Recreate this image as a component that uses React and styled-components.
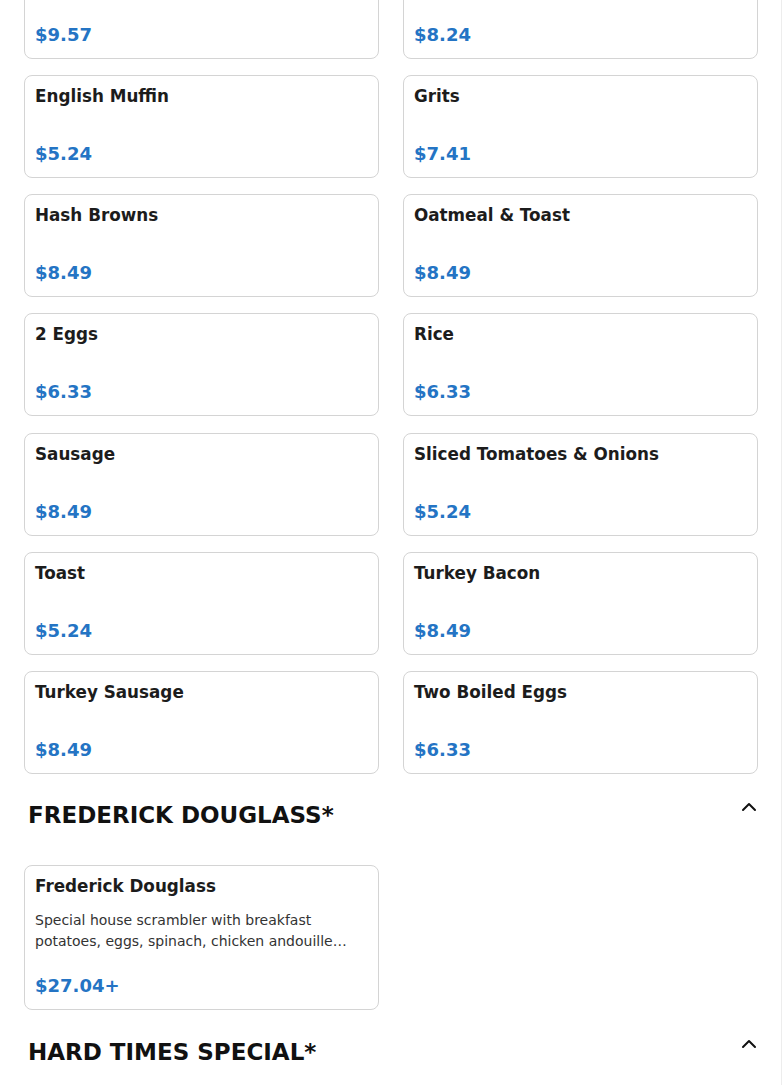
import React from "react";
import styled, { createGlobalStyle } from "styled-components";

const GlobalStyle = createGlobalStyle`
  html, body {
    margin: 0;
    padding: 0;
    background: #ffffff;
  }
  body {
    font-family: "DejaVu Sans", "Liberation Sans", sans-serif;
    color: #1a1a1a;
  }
  * { box-sizing: border-box; }
`;

const Page = styled.div`
  width: 782px;
  border-right: 1px solid #ededed;
  padding: 0 23px 40px 24px;
  overflow: hidden;
`;

const Scrolled = styled.div`
  margin-top: -44px;
`;

const Section = styled.section`
  display: flex;
  flex-direction: column;
  & + & {
    margin-top: 22.4px;
  }
`;

const SectionHeader = styled.div`
  display: flex;
  justify-content: space-between;
  align-items: flex-start;
  padding: 0 0 0 4px;
  margin-right: -3px;
  margin-bottom: 36px;
`;

const SectionTitle = styled.h2`
  margin: 5px 0 0;
  font-size: 23px;
  line-height: 28px;
  font-weight: 700;
  color: #111;
`;

const Toggle = styled.button`
  border: 0;
  background: transparent;
  padding: 0;
  margin-top: -1px;
  width: 24px;
  height: 24px;
  display: flex;
  align-items: center;
  justify-content: center;
  color: #111;
  cursor: pointer;
`;

const Grid = styled.div`
  display: grid;
  grid-template-columns: 1fr 1fr;
  column-gap: 24px;
  row-gap: 16.17px;
`;

const Card = styled.div`
  display: flex;
  flex-direction: column;
  min-height: 103px;
  padding: 10px 10px 13px;
  border: 1px solid #d4d4d4;
  border-radius: 8px;
  background: #fff;
`;

const ItemName = styled.div`
  font-size: 16.8px;
  font-weight: 700;
  color: #1c1c1c;
`;

const ItemDesc = styled.div`
  margin-top: 14px;
  font-size: 14px;
  line-height: 21px;
  color: #333;
  display: -webkit-box;
  -webkit-line-clamp: 2;
  -webkit-box-orient: vertical;
  overflow: hidden;
`;

const Price = styled.div`
  margin-top: auto;
  padding-top: ${(p) => (p.$hasDesc ? "23px" : "0")};
  font-size: 18px;
  font-weight: 700;
  color: #2474c4;
`;

const ChevronUp = () => (
  <svg
    width="24"
    height="24"
    viewBox="0 0 24 24"
    fill="none"
    stroke="currentColor"
    strokeWidth="2"
    strokeLinecap="round"
    strokeLinejoin="round"
  >
    <path d="m18 15-6-6-6 6" />
  </svg>
);

const sides = [
  { name: "Bacon", price: "$9.57" },
  { name: "Chicken Sausage", price: "$8.24" },
  { name: "English Muffin", price: "$5.24" },
  { name: "Grits", price: "$7.41" },
  { name: "Hash Browns", price: "$8.49" },
  { name: "Oatmeal & Toast", price: "$8.49" },
  { name: "2 Eggs", price: "$6.33" },
  { name: "Rice", price: "$6.33" },
  { name: "Sausage", price: "$8.49" },
  { name: "Sliced Tomatoes & Onions", price: "$5.24" },
  { name: "Toast", price: "$5.24" },
  { name: "Turkey Bacon", price: "$8.49" },
  { name: "Turkey Sausage", price: "$8.49" },
  { name: "Two Boiled Eggs", price: "$6.33" },
];

const douglass = [
  {
    name: "Frederick Douglass",
    desc: "Special house scrambler with breakfast potatoes, eggs, spinach, chicken andouille sausage, onions, bell peppers and cheese.",
    price: "$27.04+",
  },
];

const MenuCard = ({ item }) => (
  <Card>
    <ItemName>{item.name}</ItemName>
    {item.desc && <ItemDesc>{item.desc}</ItemDesc>}
    <Price $hasDesc={!!item.desc}>{item.price}</Price>
  </Card>
);

const MenuSection = ({ title, items }) => (
  <Section>
    {title && (
      <SectionHeader>
        <SectionTitle>{title}</SectionTitle>
        <Toggle aria-label="Collapse">
          <ChevronUp />
        </Toggle>
      </SectionHeader>
    )}
    {items.length > 0 && (
      <Grid>
        {items.map((it) => (
          <MenuCard key={it.name} item={it} />
        ))}
      </Grid>
    )}
  </Section>
);

export default function App() {
  return (
    <>
      <GlobalStyle />
      <Page>
        <Scrolled>
          <MenuSection items={sides} />
          <MenuSection title="FREDERICK DOUGLASS*" items={douglass} />
          <MenuSection title="HARD TIMES SPECIAL*" items={[]} />
        </Scrolled>
      </Page>
    </>
  );
}
